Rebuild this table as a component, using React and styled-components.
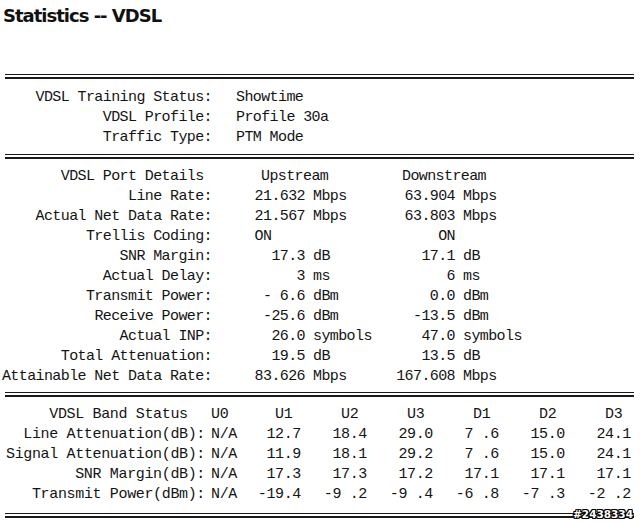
import styled, { createGlobalStyle } from "styled-components";

const GlobalStyle = createGlobalStyle`
  html, body {
    margin: 0;
    padding: 0;
    background: #ffffff;
  }
`;

const status = [
  ["VDSL Training Status:", "Showtime"],
  ["VDSL Profile:", "Profile 30a"],
  ["Traffic Type:", "PTM Mode"],
];

const port = [
  ["Line Rate:", "21.632", "Mbps", "63.904", "Mbps"],
  ["Actual Net Data Rate:", "21.567", "Mbps", "63.803", "Mbps"],
  ["Trellis Coding:", "ON    ", "", "ON", ""],
  ["SNR Margin:", "17.3", "dB", "17.1", "dB"],
  ["Actual Delay:", "3", "ms", "6", "ms"],
  ["Transmit Power:", "- 6.6", "dBm", "0.0", "dBm"],
  ["Receive Power:", "-25.6", "dBm", "-13.5", "dBm"],
  ["Actual INP:", "26.0", "symbols", "47.0", "symbols"],
  ["Total Attenuation:", "19.5", "dB", "13.5", "dB"],
  ["Attainable Net Data Rate:", "83.626", "Mbps", "167.608", "Mbps"],
];

const bands = ["U1", "U2", "U3", "D1", "D2", "D3"];

const bandRows = [
  ["Line Attenuation(dB):", "N/A", "12.7", "18.4", "29.0", "7 .6", "15.0", "24.1"],
  ["Signal Attenuation(dB):", "N/A", "11.9", "18.1", "29.2", "7 .6", "15.0", "24.1"],
  ["SNR Margin(dB):", "N/A", "17.3", "17.3", "17.2", "17.1", "17.1", "17.1"],
  ["Transmit Power(dBm):", "N/A", "-19.4", "-9 .2", "-9 .4", "-6 .8", "-7 .3", "-2 .2"],
];

export default function App() {
  return (
    <Page>
      <GlobalStyle />
      <Title>Statistics -- VDSL</Title>

      <Rule />
      <Section $top={9} $bottom={6}>
        {status.map(([label, value]) => (
          <Row key={label} $cols="212px 1fr">
            <Cell $right>{label}</Cell>
            <Cell $pad={24}>{value}</Cell>
          </Row>
        ))}
      </Section>

      <Rule />
      <Section $top={8} $bottom={5}>
        <Row $cols="212px 93px 90px 60px 1fr">
          <Cell $right>{"VDSL Port Details "}</Cell>
          <Cell $pad={49} $span={2}>Upstream</Cell>
          <Cell $pad={7} $span={2}>Downstream</Cell>
        </Row>
        {port.map(([label, up, upUnit, down, downUnit]) => (
          <Row key={label} $cols="212px 93px 90px 60px 1fr">
            <Cell $right>{label}</Cell>
            <Cell $right>{up}</Cell>
            <Cell $pad={8}>{upUnit}</Cell>
            <Cell $right>{down}</Cell>
            <Cell $pad={8}>{downUnit}</Cell>
          </Row>
        ))}
      </Section>

      <Rule />
      <Section $top={8} $bottom={8} $wide>
        <Row $cols="205px 30px repeat(6, 66px)">
          <Cell $right>{"VDSL Band Status  "}</Cell>
          <Cell $pad={6}>U0</Cell>
          {bands.map((b) => (
            <Cell key={b} $right>{b + " "}</Cell>
          ))}
        </Row>
        {bandRows.map(([label, u0, ...values]) => (
          <Row key={label} $cols="205px 30px repeat(6, 66px)">
            <Cell $right>{label}</Cell>
            <Cell $pad={6}>{u0}</Cell>
            {values.map((v, i) => (
              <Cell key={i} $right>{v}</Cell>
            ))}
          </Row>
        ))}
      </Section>

      <Rule />
      <Watermark>#2438334</Watermark>
    </Page>
  );
}

const Page = styled.div`
  position: relative;
  width: 640px;
  height: 523px;
  overflow: hidden;
  background: #ffffff;
  color: #141414;
  font-family: "Liberation Mono", monospace;
  font-size: 15px;
  letter-spacing: -0.6px;
`;

const Title = styled.h1`
  box-sizing: border-box;
  height: 74px;
  margin: 0;
  padding: 6px 0 0 3px;
  font-family: "DejaVu Sans", Verdana, sans-serif;
  font-weight: bold;
  font-size: 18px;
  letter-spacing: -1px;
  line-height: 20px;
  color: #111111;
`;

const Rule = styled.div`
  height: 2px;
  margin: 0 6px 0 5px;
  border-top: 1px solid #1a1a1a;
  border-bottom: 2px solid #1a1a1a;
`;

const Section = styled.div`
  padding: ${(p) => p.$top}px 0 ${(p) => p.$bottom}px;
  letter-spacing: ${(p) => (p.$wide ? "-0.35px" : "inherit")};
`;

const Row = styled.div`
  display: grid;
  grid-template-columns: ${(p) => p.$cols};
  height: 20px;
  line-height: 20px;
  white-space: pre;
`;

const Cell = styled.span`
  text-align: ${(p) => (p.$right ? "right" : "left")};
  padding-left: ${(p) => p.$pad || 0}px;
  grid-column: ${(p) => (p.$span ? `span ${p.$span}` : "auto")};
`;

const Watermark = styled.div`
  position: absolute;
  right: 7px;
  bottom: 3px;
  font-family: "DejaVu Sans", sans-serif;
  font-weight: bold;
  font-size: 10.5px;
  letter-spacing: 0;
  color: #ffffff;
  text-shadow: -1px 0 #000, 1px 0 #000, 0 -1px #000, 0 1px #000,
    -1px -1px #000, 1px 1px #000, -1px 1px #000, 1px -1px #000;
`;
